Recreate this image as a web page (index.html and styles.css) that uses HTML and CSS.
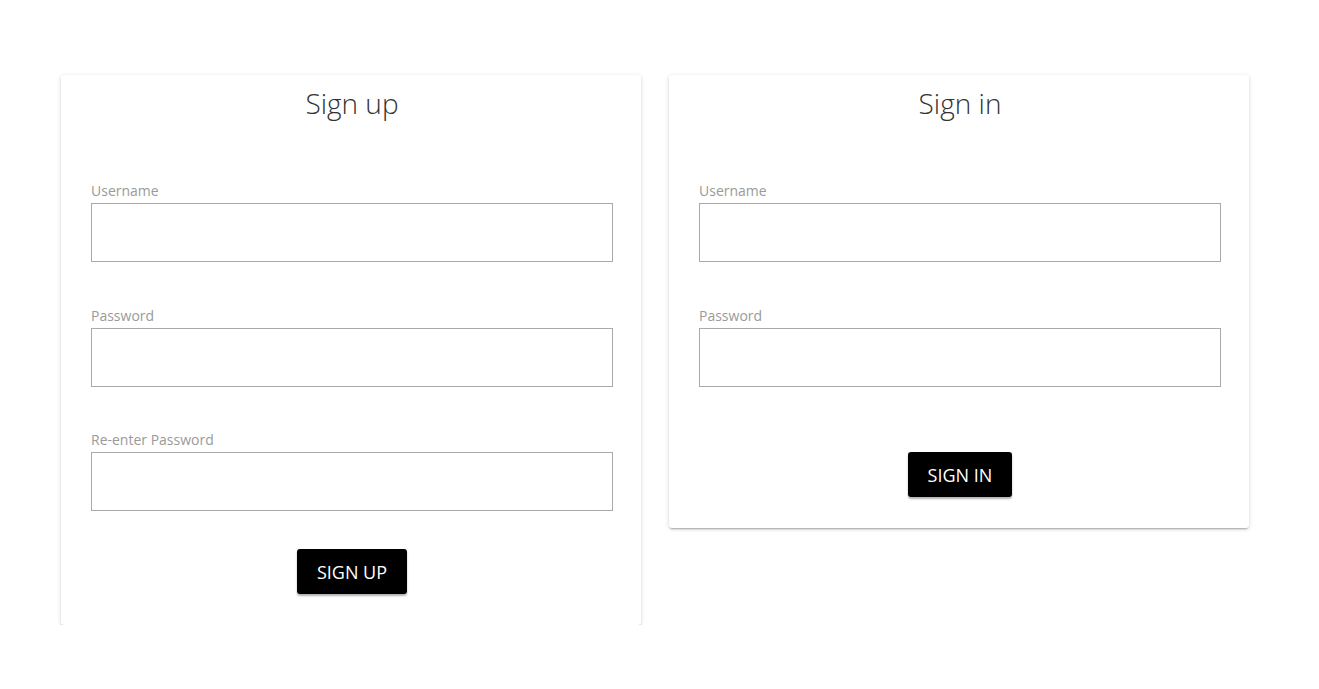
FILE: index.html
```html
<!DOCTYPE html>
<html lang="en">
<head>
<meta charset="utf-8">
<title>Sign up / Sign in</title>
<link rel="stylesheet" href="styles.css">
</head>
<body>
<main class="page">
  <section class="card">
    <h1 class="card-title">Sign up</h1>
    <form class="form">
      <label class="field">
        <span class="field-label">Username</span>
        <input class="field-input" type="text">
      </label>
      <label class="field">
        <span class="field-label">Password</span>
        <input class="field-input" type="password">
      </label>
      <label class="field">
        <span class="field-label">Re-enter Password</span>
        <input class="field-input" type="password">
      </label>
      <div class="actions actions-signup">
        <button class="btn" type="button">SIGN UP</button>
      </div>
    </form>
  </section>
  <section class="card">
    <h1 class="card-title">Sign in</h1>
    <form class="form">
      <label class="field">
        <span class="field-label">Username</span>
        <input class="field-input" type="text">
      </label>
      <label class="field">
        <span class="field-label">Password</span>
        <input class="field-input" type="password">
      </label>
      <div class="actions actions-signin">
        <button class="btn" type="button">SIGN IN</button>
      </div>
    </form>
  </section>
</main>
</body>
</html>
```
FILE: styles.css
```css
* { box-sizing: border-box; }

html, body {
  margin: 0;
  background: #fff;
  font-family: "Open Sans", "Noto Sans", "Liberation Sans", sans-serif;
}

.page {
  display: flex;
  align-items: flex-start;
  gap: 28px;
  padding: 75px 0 0 61px;
}

.card {
  width: 580px;
  background: #fff;
  border-radius: 3px;
  padding: 8px 28px 31px 30px;
  box-shadow: 0 2px 2px -1px rgba(0,0,0,.28), 0 1px 4px 0 rgba(0,0,0,.16);
}

.card-title {
  margin: 0;
  font-weight: 300;
  font-size: 28px;
  line-height: 40px;
  text-align: center;
  color: #333;
}

.form {
  display: flex;
  flex-direction: column;
  margin-top: 58px;
}

.field {
  display: flex;
  flex-direction: column;
  gap: 2px;
  margin-bottom: 43.5px;
}

.field-label {
  font-size: 14px;
  line-height: 20px;
  color: #9a9a9a;
}

.field-input {
  display: block;
  width: 100%;
  height: 59px;
  margin: 0;
  border: 1px solid #aaa;
  border-radius: 0;
  background: #fff;
  font: inherit;
  outline: none;
}

.actions {
  display: flex;
  justify-content: center;
}

.actions-signup { margin-top: -5.5px; }
.actions-signin { margin-top: 22px; }

.btn {
  height: 45px;
  padding: 0 20px;
  border: 0;
  border-radius: 3px;
  background: #000;
  color: #fff;
  font-family: inherit;
  font-size: 18px;
  box-shadow: 0 2px 2px rgba(0,0,0,.3);
  cursor: pointer;
}
```
